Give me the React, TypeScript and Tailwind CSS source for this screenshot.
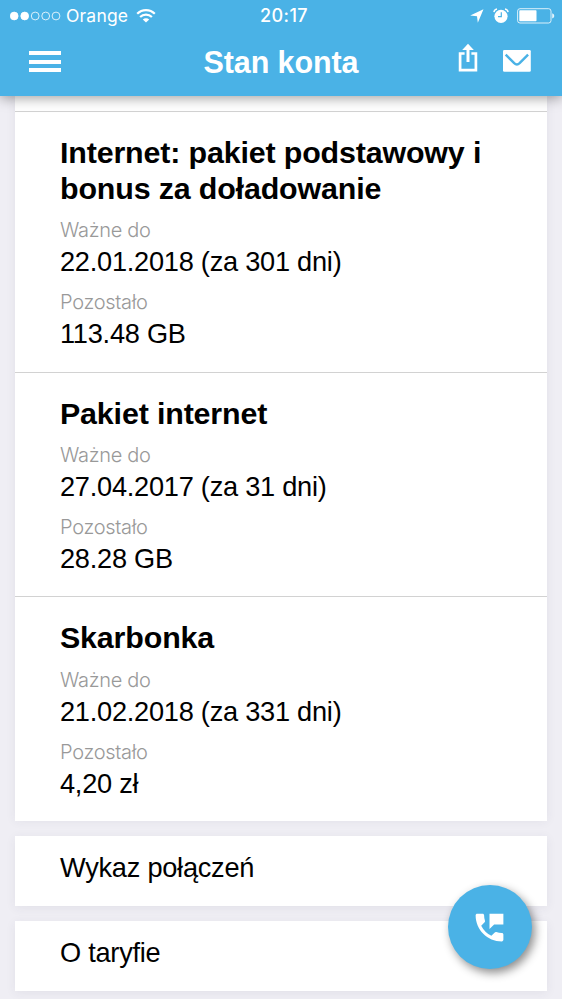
import { MdPermPhoneMsg } from 'react-icons/md';

type Balance = { title: string; valid: string; left: string; box: string };

const balances: Balance[] = [
  {
    title: 'Internet: pakiet podstawowy i bonus za doładowanie',
    valid: '22.01.2018 (za 301 dni)',
    left: '113.48 GB',
    box: 'h-[261px] border-b pt-[23px]',
  },
  { title: 'Pakiet internet', valid: '27.04.2017 (za 31 dni)', left: '28.28 GB', box: 'h-[224px] border-b pt-[22.5px]' },
  { title: 'Skarbonka', valid: '21.02.2018 (za 331 dni)', left: '4,20 zł', box: 'h-[224px] pt-[23px]' },
];

function StatusBar() {
  return (
    <div className="relative flex h-8 items-center justify-between pl-2.5 pr-[7px] font-['Inter',sans-serif]">
      <div className="flex items-center">
        <svg width="52" height="10" viewBox="0 0 52 10" fill="none" stroke="white" strokeWidth="0.8">
          <circle cx="4.2" cy="5" r="3.9" fill="white" />
          <circle cx="14.7" cy="5" r="3.9" fill="white" />
          <circle cx="25.2" cy="5" r="3.9" />
          <circle cx="35.7" cy="5" r="3.9" />
          <circle cx="46" cy="5" r="3.9" />
        </svg>
        <span className="ml-[4px] w-[63px] text-[17.5px] leading-8 tracking-[0.2px]">Orange</span>
        <svg className="ml-[7px] -mt-0.5" width="20" height="15" viewBox="0 0 20 15" fill="none" stroke="white" strokeWidth="2.2">
          <path d="M1.2 5.7a12.4 12.4 0 0 1 17.6 0" />
          <path d="M4.1 9a8.4 8.4 0 0 1 11.8 0" />
          <path d="M6.8 11.6a4.6 4.6 0 0 1 6.4 0L10 14.6Z" fill="white" stroke="none" />
        </svg>
      </div>
      <span className="absolute inset-x-0 pl-[6px] text-center text-[18px] font-medium leading-8 tracking-[0.4px]">20:17</span>
      <div className="flex items-center">
        <svg width="14" height="14" viewBox="0 0 14 14" fill="white">
          <path d="M13.5 0.3 7.8 13.7 7 7.3 0.2 6.4Z" />
        </svg>
        <svg className="ml-[9px]" width="16" height="16" viewBox="0 0 16 16" fill="none">
          <circle cx="8" cy="8.3" r="6.6" fill="white" />
          <path d="M8.3 4.3v4.3H5" stroke="#4ab2e6" strokeWidth="1.2" />
          <path d="M0.9 4.1A3.8 3.8 0 0 1 4 1M12 1a3.8 3.8 0 0 1 3.1 3.1" stroke="white" strokeWidth="1.4" />
        </svg>
        <svg className="ml-[8px]" width="38" height="16" viewBox="0 0 38 16" fill="none">
          <rect x="0.6" y="0.7" width="33.4" height="14.3" rx="2.4" stroke="white" strokeWidth="1" strokeOpacity="0.8" />
          <rect x="2.3" y="2.3" width="17.2" height="11" rx="0.7" fill="white" />
          <path d="M35.2 5.3q2.1.8 2.1 2.6t-2.1 2.6Z" fill="white" fillOpacity="0.85" />
        </svg>
      </div>
    </div>
  );
}

function NavBar() {
  return (
    <div className="relative flex h-16 items-start justify-between pl-[29px] pr-[31px]">
      <div className="mt-[19px] flex h-[21px] w-8 flex-col justify-between">
        <span className="h-[4px] bg-white" />
        <span className="h-[4px] bg-white" />
        <span className="h-[4px] bg-white" />
      </div>
      <h1 className="absolute inset-x-0 top-3 text-center text-[30.5px] font-bold leading-9 tracking-[-0.1px]">Stan konta</h1>
      <div className="flex gap-[25px]">
        <svg className="mt-[11px]" width="20" height="29" viewBox="0 0 20 29" fill="none" stroke="white">
          <path d="M6.6 10.5H2.1v16.7h15.8V10.5H13.4" strokeWidth="2.7" />
          <path d="M10 5v14" strokeWidth="3" />
          <path d="M10 .7 15.8 7H4.2Z" fill="white" stroke="none" />
        </svg>
        <svg className="mt-[18px]" width="28" height="22" viewBox="0 0 28 22" fill="none">
          <rect width="27.8" height="21.8" rx="1.3" fill="white" />
          <path d="M2.7 4.6 11.2 13.2q2.7 2.6 5.4 0L25.1 4.6" stroke="#4ab2e6" strokeWidth="2.4" />
        </svg>
      </div>
    </div>
  );
}

function Field({ label, value }: { label: string; value: string }) {
  return (
    <div className="pt-3">
      <div className="font-['Inter',sans-serif] text-[20px] font-light leading-6 tracking-[-0.3px] text-[#999]">{label}</div>
      <div className="mt-1 text-[27.2px] leading-8 tracking-[-0.25px]">{value}</div>
    </div>
  );
}

function LinkCard({ text }: { text: string }) {
  return (
    <div className="mt-[15px] h-[70px] bg-white pl-[45px] pt-[16px] text-[27.2px] leading-8 tracking-[-0.25px] shadow-[0_2px_10px_rgba(60,50,90,0.07)]">
      {text}
    </div>
  );
}

export default function App() {
  return (
    <div className="relative h-[999px] w-[562px] overflow-hidden bg-[#efeef4] font-['Liberation_Sans',Arial,sans-serif] text-black">
      <header className="relative z-10 h-24 bg-[#4ab2e6] text-white shadow-[0_2px_12px_rgba(0,0,0,0.38)]">
        <StatusBar />
        <NavBar />
      </header>
      <main className="px-[15px]">
        <div className="bg-white shadow-[0_0_10px_rgba(60,50,90,0.07)]">
          <div className="h-4 border-b border-[#d2d2d2]" />
          {balances.map((b) => (
            <section key={b.title} className={`border-[#d2d2d2] pl-[45px] ${b.box}`}>
              <h2 className="w-[440px] text-[30.4px] font-bold leading-[35.5px] tracking-[-0.15px]">{b.title}</h2>
              <Field label="Ważne do" value={b.valid} />
              <Field label="Pozostało" value={b.left} />
            </section>
          ))}
        </div>
        <LinkCard text="Wykaz połączeń" />
        <LinkCard text="O taryfie" />
      </main>
      <button className="absolute left-[448px] top-[885px] z-20 flex size-[84px] items-center justify-center rounded-full bg-[#4ab2e6] pr-px text-white shadow-[3px_4px_10px_rgba(0,0,0,0.45)]">
        <MdPermPhoneMsg size={37} />
      </button>
    </div>
  );
}
